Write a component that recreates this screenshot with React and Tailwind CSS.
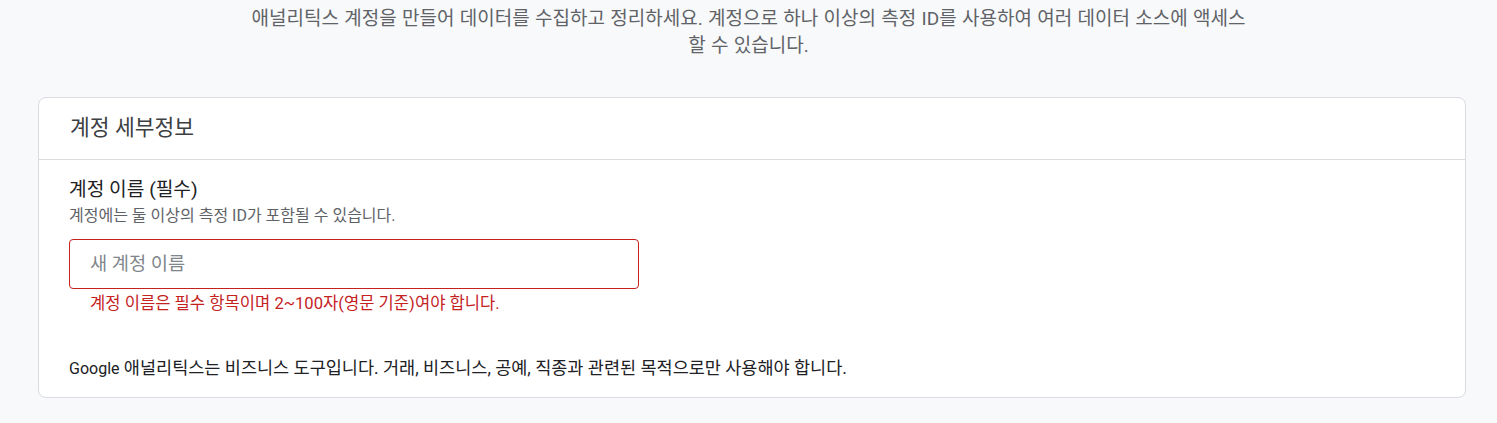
export default function App() {
  const font = { fontFamily: 'Roboto, "Noto Sans CJK KR", sans-serif' };
  return (
    <div className="min-h-[423px] w-[1497px] bg-[#f8f9fa]" style={font}>
      <div className="flex justify-center pt-[5px]">
        <p className="text-center text-[19px] leading-[27px] text-[#5f6368] [word-spacing:0.6px]">
          <span>애널리틱스 계정을 만들어 데이터를 수집하고 정리하세요. 계정으로 하나 이상의 측정 ID를 사용하여 여러 데이터 소스에 액세스</span>
          <br />
          <span>할 수 있습니다.</span>
        </p>
      </div>
      <div className="ml-[38px] mt-[38px] w-[1428px] rounded-[8px] border border-[#dadce0] bg-white">
        <div className="flex h-[62px] items-center border-b border-[#dadce0] px-[31px]">
          <h2 className="text-[21.5px] text-[#3c4043]">계정 세부정보</h2>
        </div>
        <div className="px-[30px] pt-[16px] pb-[16px]">
          <div className="text-[19.2px] leading-[28px] text-[#202124]">계정 이름 (필수)</div>
          <div className="text-[16px] leading-[24px] text-[#5f6368]">
            계정에는 둘 이상의 측정 ID가 포함될 수 있습니다.
          </div>
          <div className="mt-[11px] flex h-[50px] w-[570px] items-center rounded-[4px] border border-[#c5221f] px-[20px]">
            <span className="text-[18.7px] text-[#80868b]">새 계정 이름</span>
          </div>
          <div className="mt-[4px] pl-[21px] text-[16.6px] leading-[22px] text-[#c5221f]">
            계정 이름은 필수 항목이며 2~100자(영문 기준)여야 합니다.
          </div>
          <div className="mt-[41px] text-[17.5px] leading-[24px] text-[#202124]">
            <span className="text-[16px]">Google</span> 애널리틱스는 비즈니스 도구입니다. 거래, 비즈니스, 공예, 직종과 관련된 목적으로만 사용해야 합니다.
          </div>
        </div>
      </div>
    </div>
  );
}
